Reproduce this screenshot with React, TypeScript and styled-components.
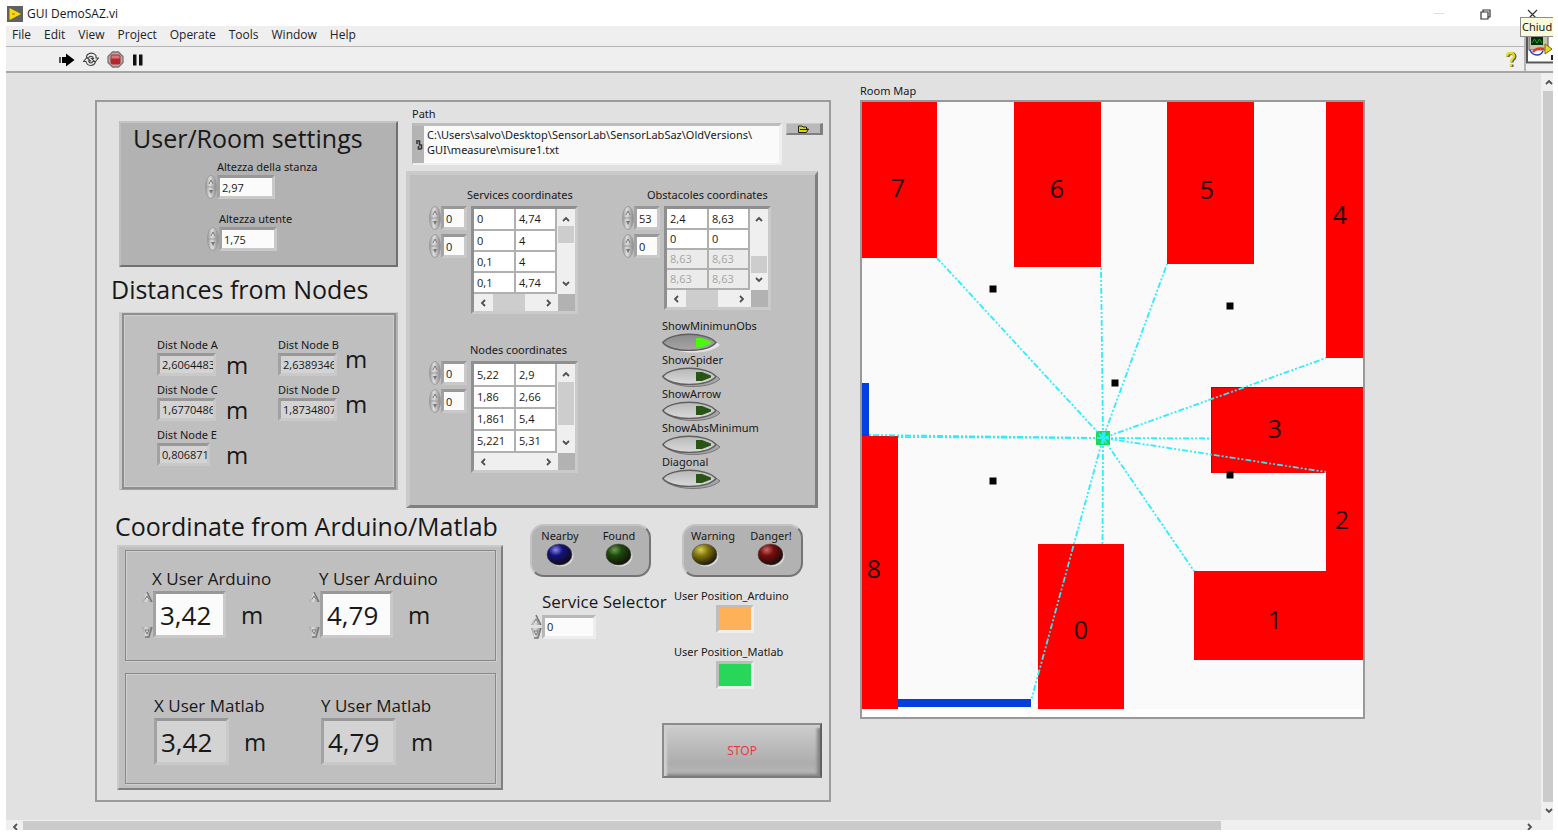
import React from "react";
import styled, { createGlobalStyle, css } from "styled-components";

const GlobalStyle = createGlobalStyle`
  *, *::before, *::after { box-sizing: border-box; }
  body {
    margin: 0;
    background: #fff;
    color: #181818;
    font-family: "Noto Sans", "Open Sans", sans-serif;
    font-size: 11px;
    line-height: 16px;
    overflow: hidden;
  }
  input, button, textarea { font: inherit; color: inherit; margin: 0; }
`;

const displayFont = `"Open Sans", "Noto Sans", sans-serif`;

/* ---------- window chrome ---------- */

const Window = styled.div`
  display: flex;
  flex-direction: column;
  height: 100vh;
  min-height: 830px;
  padding: 0 5px 4px 6px;
  overflow: hidden;
`;

const TitleBar = styled.header`
  display: flex;
  align-items: center;
  height: 26px;
  flex: none;
  padding: 2px 15px 0 1px;
  gap: 4px;
`;

const Title = styled.h1`
  flex: 1;
  margin: 0;
  font-family: ${displayFont};
  font-size: 12px;
  font-weight: 400;
`;

const WindowButtons = styled.div`
  display: flex;
  align-items: center;
  gap: 36px;
`;

const PlainButton = styled.button`
  display: flex;
  align-items: center;
  justify-content: center;
  padding: 0;
  border: 0;
  background: none;
`;

const Bars = styled.div`
  display: flex;
  flex: none;
  height: 47px;
  border-bottom: 2px solid #a6a6a6;
  background: #efefef;
`;

const BarStack = styled.div`
  flex: 1;
`;

const MenuBar = styled.nav`
  display: flex;
  align-items: center;
  height: 21px;
  gap: 13px;
  padding: 0 6px 2px;
  border-bottom: 1px solid #b5b5b5;
  font-family: ${displayFont};
  font-size: 12px;
`;

const MenuItem = styled(PlainButton)`
  color: #22222c;
`;

const ToolBar = styled.div`
  display: flex;
  align-items: center;
  height: 24px;
  padding: 1px 7px 0 53px;
  gap: 8px;
`;

const ToolSpacer = styled.div`
  flex: 1;
`;

const IconPane = styled.div`
  position: relative;
  width: 29px;
  border-left: 2px solid #b5b5b5;
  padding-top: 9px;
`;

const Tooltip = styled.div`
  position: absolute;
  z-index: 2;
  top: -9px;
  right: 0;
  width: 33px;
  height: 20px;
  padding-left: 1px;
  border: 1px solid #8c8c8c;
  border-width: 1px 0 1px 1px;
  background: #fbfbdc;
  line-height: 18px;
  white-space: nowrap;
`;

const Body = styled.div`
  display: grid;
  flex: 1;
  min-height: 0;
  grid-template-columns: 1fr 12px;
  grid-template-rows: 1fr 10px;
  background: #efefef;
`;

const VScroll = styled.div`
  display: flex;
  flex-direction: column;
  align-items: flex-end;
  overflow: hidden;
`;

const VThumb = styled.div`
  flex: 1;
  align-self: stretch;
  margin: 0 0 0 2px;
  background: #cbcbcb;
`;

const VArrow = styled(PlainButton)`
  height: 18px;
`;

const HScroll = styled.div`
  display: flex;
  grid-column: 1 / -1;
  padding: 1px 15px 0 0;
  overflow: hidden;
`;

const HArrow = styled(PlainButton)`
  width: 17px;
  height: 12px;
`;

const HThumb = styled.div`
  flex: 4;
  background: #cbcbcb;
`;

const HTrack = styled.div`
  flex: 1;
`;

const Workspace = styled.main`
  display: grid;
  grid-template-columns: 736fr 505fr;
  align-items: start;
  column-gap: 29px;
  padding: 27px 176px 18px 89px;
  background: #e1e1e1;
  overflow: hidden;
`;

/* ---------- frames and panels ---------- */

const MainFrame = styled.section`
  border: 2px solid #9b9b9b;
  padding-bottom: 10px;
`;

const TopRow = styled.div`
  display: grid;
  grid-template-columns: 308fr 424fr;
  align-items: start;
`;

const SettingsColumn = styled.div`
  padding: 19px 7px 0 22px;
`;

const raised = css`
  border: 2px solid;
  border-color: #cacaca #808080 #808080 #cacaca;
`;

const UserPanel = styled.div`
  ${raised}
  display: grid;
  align-content: start;
  row-gap: 6px;
  height: 146px;
  padding-left: 12px;
  border-color: #c4c4c4 #707070 #707070 #bdbdbd;
  background: #b2b2b2;
`;

const Heading = styled.h2<{ $line: number; $shift?: number }>`
  margin: 0 0 0 ${(p) => p.$shift ?? 0}px;
  font-family: ${displayFont};
  font-size: 25px;
  font-weight: 400;
  line-height: ${(p) => p.$line}px;
  white-space: nowrap;
`;

const DistancePanel = styled.div`
  display: grid;
  grid-template-columns: 69px 52px 67px 1fr;
  grid-auto-rows: 45px;
  height: 178px;
  padding: 24px 0 0 35px;
  border: solid;
  border-width: 1px 2px 1px 3px;
  border-color: #cfcfcf #b4b4b4 #a0a0a0 #c8c8c8;
  box-shadow: inset 0 0 0 2px #8e8e8e, inset 0 0 0 3px #cecece;
  background: #bfbfbf;
`;

const CoordinatesPanel = styled.div`
  ${raised}
  display: grid;
  grid-template-columns: 193px 1fr;
  border-width: 4px 3px 3px 4px;
  width: 412px;
  max-width: 100%;
  height: 337px;
  padding: 8px 0 0 19px;
  background: #bfbfbf;
`;

const BottomRow = styled.div`
  display: grid;
  grid-template-columns: 408fr 324fr;
`;

const PositionColumn = styled.div`
  padding-left: 20px;
`;

const PositionPanel = styled.div`
  ${raised}
  display: grid;
  row-gap: 12px;
  width: 386px;
  padding: 3px 5px 4px 6px;
  background: #bfbfbf;
`;

const PositionFrame = styled.div<{ $top: number }>`
  display: grid;
  grid-template-columns: 167px 1fr;
  height: 111px;
  padding: ${(p) => p.$top}px 0 0 15px;
  border: 1px solid #888;
  box-shadow: inset 1px 1px 0 #cfcfcf, 1px 1px 0 #cfcfcf;
`;

/* ---------- fields ---------- */

const FieldLabel = styled.label<{ $large?: boolean }>`
  display: block;
  width: max-content;
  white-space: nowrap;
  ${(p) =>
    p.$large &&
    css`
      font-family: ${displayFont};
      font-size: 17px;
      line-height: 24px;
    `}
`;

const FieldRow = styled.div`
  display: flex;
  align-items: center;
`;

const ValueInput = styled.input<{ $w: number; $h: number; $flat?: boolean; $big?: boolean }>`
  width: ${(p) => p.$w}px;
  height: ${(p) => p.$h}px;
  padding: 0 0 0 ${(p) => (p.$big ? 4 : 2)}px;
  border: 3px solid;
  border-color: #989898 #c9c9c9 #c9c9c9 #a2a2a2;
  border-radius: 0;
  outline: 0;
  background: ${(p) => (p.$flat ? "#d3d3d3" : "#fbfbfb")};
  font-family: ${displayFont};
  font-size: ${(p) => (p.$big ? 26 : 11)}px;
`;

const LightInput = styled(ValueInput)`
  border-color: #b8b8b8 #ededed #ededed #b8b8b8;
`;

const NumericBlock = styled.div<{ $left: number }>`
  padding-left: ${(p) => p.$left}px;
  margin-bottom: 6px;

  & > label { margin-left: 12px; }
`;

const Unit = styled.span<{ $lift?: boolean }>`
  align-self: end;
  padding-bottom: ${(p) => (p.$lift ? 6 : 0)}px;
  font-family: ${displayFont};
  font-size: 24px;
  line-height: 34px;
`;

const BigUnit = styled(Unit)`
  align-self: center;
  margin-left: 15px;
`;

function Spinner({ id, height = 24, bare = false }: { id: string; height?: number; bare?: boolean }) {
  const h = height;
  return (
    <svg width="12" height={h} viewBox={`0 0 12 ${h}`} aria-hidden="true">
      <defs>
        <linearGradient id={id} x1="0" x2="1">
          <stop offset="0" stopColor="#989898" />
          <stop offset="0.4" stopColor="#dedede" />
          <stop offset="1" stopColor="#868686" />
        </linearGradient>
      </defs>
      {bare ? (
        <>
          <path d="M1 11 L6 1 L11 11 Z" fill={`url(#${id})`} />
          <path d="M11 11 L6 1" stroke="#777" strokeWidth="1.5" />
          <path d="M4 8.500 L6 5 L8 8.500" fill="#e6e6e6" stroke="#777" />
          <path d={`M1 ${h - 11} L11 ${h - 11} L8 ${h - 1} L4 ${h - 1} Z`} fill={`url(#${id})`} />
          <path d={`M11 ${h - 11} L8 ${h - 1} H4`} fill="none" stroke="#777" strokeWidth="1.5" />
          <path d={`M4 ${h - 8} L8 ${h - 8} L6 ${h - 4} Z`} fill="#e6e6e6" stroke="#777" />
        </>
      ) : (
        <>
          <ellipse cx="6" cy={h / 2} rx="5.5" ry={h / 2 - 0.5} fill={`url(#${id})`} stroke="#9c9c9c" />
          <path d={`M1 ${h / 2} H11`} stroke="#9a9a9a" />
          <path d={`M4 ${h / 2 - 3} L6 ${h / 2 - 7} L8 ${h / 2 - 3}`} fill="#e2e2e2" stroke="#777" />
          <path d={`M4 ${h / 2 + 3} H8 L6 ${h / 2 + 7} Z`} fill="#777" />
        </>
      )}
    </svg>
  );
}

function Reading({ id, label, value, width = 59 }: { id: string; label: string; value: string; width?: number }) {
  return (
    <div>
      <FieldLabel htmlFor={id}>{label}</FieldLabel>
      <FieldRow>
        <ValueInput id={id} $w={width} $h={23} $flat readOnly defaultValue={value} />
      </FieldRow>
    </div>
  );
}

/* ---------- path control ---------- */

const PathColumn = styled.div`
  padding: 4px 6px 0 1px;
`;

const PathLabel = styled(FieldLabel)`
  margin-left: 6px;
`;

const PathRow = styled.div`
  display: flex;
  align-items: flex-start;
  gap: 4px;
  margin: 1px 0 6px 6px;
`;

const PathBox = styled.div`
  display: flex;
  flex: 1;
  height: 42px;
  border: 3px solid;
  border-color: #bdbdbd #efefef #efefef #b4b4b4;
  border-width: 3px 3px 2px 1px;
  background: #fafafa;
`;

const PathMark = styled.div`
  display: flex;
  align-items: center;
  justify-content: center;
  width: 11px;
  background: #b4b4b4;
`;

const PathText = styled.textarea`
  flex: 1;
  min-width: 0;
  padding: 1px 0 0 3px;
  border: 0;
  outline: 0;
  resize: none;
  overflow: hidden;
  background: none;
  line-height: 15px;
  white-space: pre;
`;

const BrowseButton = styled(PlainButton)`
  ${raised}
  width: 37px;
  height: 12px;
  border-width: 1px 3px 2px 1px;
  background: #b9b9b9;
`;

/* ---------- arrays ---------- */

const ArrayTitle = styled.div<{ $shift: number }>`
  margin-left: ${(p) => p.$shift}px;
  line-height: 23px;
  white-space: nowrap;
`;

const ArrayBlock = styled.div`
  margin-bottom: 24px;
`;

const ArrayRow = styled.div`
  display: flex;
  align-items: flex-start;
  gap: 4px;
`;

const IndexStack = styled.div`
  display: grid;
  row-gap: 4px;
`;

const ArrayBox = styled.div`
  width: 107px;
  border: 3px solid;
  border-color: #8f8f8f #cacaca #cacaca #8f8f8f;
  background: #efefef;
`;

const ArrayBody = styled.div`
  display: flex;
`;

const DataTable = styled.table`
  width: 83px;
  border-collapse: collapse;
  table-layout: fixed;
`;

const Cell = styled.td<{ $h: number; $dim?: boolean }>`
  height: ${(p) => p.$h}px;
  padding: 0 0 0 3px;
  border-right: 2px solid #b0b0b0;
  border-bottom: 2px solid #b0b0b0;
  background: ${(p) => (p.$dim ? "#ebebeb" : "#fff")};
  color: ${(p) => (p.$dim ? "#a5a5a5" : "#181818")};
  font-family: ${displayFont};
  line-height: 16px;
`;

const SideBar = styled.div`
  position: relative;
  display: flex;
  flex: 1;
  flex-direction: column;
  align-items: center;
  justify-content: space-between;
  padding: 6px 0;
`;

const SideThumb = styled.div<{ $top: number; $size: number }>`
  position: absolute;
  top: ${(p) => p.$top}px;
  left: 1px;
  right: 1px;
  height: ${(p) => p.$size}px;
  background: #cdcdcd;
`;

const FootBar = styled.div`
  display: flex;
  align-items: stretch;
  height: 17px;
`;

const FootTrack = styled.div`
  display: flex;
  flex: 1;
  align-items: center;
  justify-content: space-between;
  padding: 0 5px;
`;

const FootThumb = styled.div<{ $on: boolean }>`
  width: 32px;
  height: 17px;
  margin-left: -14px;
  background: ${(p) => (p.$on ? "#cdcdcd" : "transparent")};
`;

const FootCorner = styled.div`
  width: 17px;
  background: #b2b2b2;
`;

type Direction = "up" | "down" | "left" | "right";

const chevrons: Record<Direction, string> = {
  up: "M1 6 L4 3 L7 6",
  down: "M1 2 L4 5 L7 2",
  left: "M6 1 L3 4 L6 7",
  right: "M2 1 L5 4 L2 7",
};

function Chevron({ dir }: { dir: Direction }) {
  return (
    <svg width="8" height="8" viewBox="0 0 8 8" fill="none" stroke="#505050" strokeWidth="1.8" aria-hidden="true">
      <path d={chevrons[dir]} />
    </svg>
  );
}

interface ArrayProps {
  name: string;
  title: string;
  titleShift: number;
  index: [string, string];
  rows: [string, string][];
  rowHeight: number;
  thumb: [number, number];
  footThumb?: boolean;
  dimFrom?: number;
}

function CoordinateArray(p: ArrayProps) {
  return (
    <ArrayBlock>
      <ArrayTitle $shift={p.titleShift}>{p.title}</ArrayTitle>
      <ArrayRow>
        <IndexStack>
          {p.index.map((v, i) => (
            <FieldRow key={i}>
              <Spinner id={`${p.name}-index-${i}`} />
              <ValueInput $w={26} $h={24} defaultValue={v} aria-label={`${p.title} index ${i + 1}`} />
            </FieldRow>
          ))}
        </IndexStack>
        <ArrayBox>
          <ArrayBody>
            <DataTable aria-label={p.title}>
              <tbody>
                {p.rows.map((row, r) => (
                  <tr key={r}>
                    {row.map((v, c) => (
                      <Cell key={c} $h={p.rowHeight} $dim={p.dimFrom !== undefined && r >= p.dimFrom}>
                        {v}
                      </Cell>
                    ))}
                  </tr>
                ))}
              </tbody>
            </DataTable>
            <SideBar>
              <Chevron dir="up" />
              <SideThumb $top={p.thumb[0]} $size={p.thumb[1]} />
              <Chevron dir="down" />
            </SideBar>
          </ArrayBody>
          <FootBar>
            <FootTrack>
              <Chevron dir="left" />
              <FootThumb $on={!!p.footThumb} />
              <Chevron dir="right" />
            </FootTrack>
            <FootCorner />
          </FootBar>
        </ArrayBox>
      </ArrayRow>
    </ArrayBlock>
  );
}

/* ---------- toggles ---------- */

const ToggleList = styled.div`
  display: grid;
  margin: -16px 0 0 40px;
`;

const ToggleLabel = styled.label`
  display: block;
  height: 34px;
  line-height: 15px;
`;

const HiddenCheck = styled.input`
  position: absolute;
  width: 56px;
  height: 18px;
  opacity: 0;
`;

const ToggleArt = styled.svg`
  display: block;
`;

function Toggle({ label, on = false }: { label: string; on?: boolean }) {
  return (
    <ToggleLabel>
      {label}
      <HiddenCheck type="checkbox" defaultChecked={on} />
      <ToggleArt width="60" height="20" viewBox="0 0 60 20" aria-hidden="true">
        <defs>
          <linearGradient id={`toggle-${label}`} x1="0" y1="0" x2="0" y2="1">
            <stop offset="0" stopColor={on ? "#8c8c8c" : "#b8b8b8"} />
            <stop offset="1" stopColor={on ? "#a5a5a5" : "#dadada"} />
          </linearGradient>
        </defs>
        <path d="M4 12 C10 2 48 2 58 12 C48 22 14 22 4 12 Z" fill={on ? "#e6e6e6" : "#a5a5a5"} stroke={on ? "none" : "#777"} />
        <path
          d="M0.8 9.500 C9 -1.500 45 -1.500 54 9.500 C45 20 9 20 0.8 9.500 Z"
          fill={`url(#toggle-${label})`}
          stroke="#5f5f5f"
          strokeWidth="1.400"
        />
        <path d="M34 5 H40 L49 8.500 V10.500 L40 14 H34 Z" fill={on ? "#4cf711" : "#2a5416"} />
      </ToggleArt>
    </ToggleLabel>
  );
}

/* ---------- status area ---------- */

const StatusArea = styled.div`
  display: grid;
  grid-template-columns: 132px 1fr;
  align-content: start;
  padding: 16px 7px 0 25px;
`;

const LedGroup = styled.div`
  display: grid;
  grid-template-columns: 59px 1fr;
  width: 121px;
  height: 53px;
  padding: 3px 0 0 7px;
  border: 2px solid;
  border-color: #c3c3c3 #747474 #747474 #c3c3c3;
  border-radius: 14px;
  background: #b2b2b2;
`;

const LedItem = styled.div<{ $start?: boolean }>`
  display: grid;
  align-content: start;
  justify-items: ${(p) => (p.$start ? "start" : "center")};
  width: 42px;
  line-height: 14px;
  white-space: nowrap;
`;

const StatusColumn = styled.div<{ $shift: number }>`
  margin-left: ${(p) => p.$shift}px;
`;

function Led({ label, light, dark, start }: { label: string; light: string; dark: string; start?: boolean }) {
  return (
    <LedItem $start={start}>
      {label}
      <svg width="28" height="24" viewBox="0 0 28 24" aria-hidden="true">
        <defs>
          <radialGradient id={`led-${label}`} cx="0.35" cy="0.28" r="0.8">
            <stop offset="0" stopColor={light} />
            <stop offset="0.35" stopColor={dark} />
            <stop offset="1" stopColor="#0d0a08" />
          </radialGradient>
        </defs>
        <ellipse cx="15" cy="13" rx="12.5" ry="10.5" fill="#d8d8d8" />
        <ellipse cx="13.5" cy="11.5" rx="12.5" ry="10.5" fill={`url(#led-${label})`} stroke="#555" strokeWidth="0.6" />
      </svg>
    </LedItem>
  );
}

const SelectorBlock = styled.div`
  margin-top: 13px;

  & > label { margin-left: 12px; }
`;

const SwatchBlock = styled.div`
  display: grid;
  justify-items: start;
  margin: 10px 0 10px -8px;
  line-height: 18px;
`;

const Swatch = styled.div<{ $color: string }>`
  width: 38px;
  height: 28px;
  margin-left: 42px;
  border: 3px solid;
  border-color: #bdbdbd #eee #eee #bdbdbd;
  background: ${(p) => p.$color};
`;

const StopButton = styled.button`
  display: block;
  width: 160px;
  height: 55px;
  margin: 34px 0 0 -20px;
  padding: 0;
  border: 2px solid;
  border-color: #8b8b8b #606060 #7b7b7b #8b8b8b;
  border-radius: 0;
  box-shadow: inset 3px 3px 2px #cfcfcf, inset -3px -2px 3px #858585;
  background: linear-gradient(#cdcdcd, #adadad 75%, #b8b8b8);
  color: #f03040;
  font-family: ${displayFont};
  font-size: 12px;
`;

/* ---------- room map ---------- */

const MapColumn = styled.section`
  margin-top: -18px;
`;

const MapTitle = styled.h2`
  margin: 0 0 1px;
  font-size: 11px;
  font-weight: 400;
  line-height: 17px;
`;

const MapFrame = styled.div`
  border: 2px solid #999;
  background: #fff;
`;

const MapSvg = styled.svg`
  display: block;
  width: 100%;
  height: auto;
  font-family: ${displayFont};
  font-size: 25px;
`;

const obstacles = [
  { x: 0, y: 0, w: 75, h: 156, n: "7", cx: 36, cy: 86 },
  { x: 152, y: 0, w: 87, h: 165, n: "6", cx: 195, cy: 87 },
  { x: 305, y: 0, w: 87, h: 162, n: "5", cx: 345, cy: 88 },
  { x: 464, y: 0, w: 37, h: 256, n: "4", cx: 478, cy: 113 },
  { x: 0, y: 334, w: 36, h: 273, n: "8", cx: 12, cy: 467 },
  { x: 176, y: 442, w: 86, h: 165, n: "0", cx: 219, cy: 528 },
  { x: 332, y: 469, w: 169, h: 89, n: "1", cx: 413, cy: 518 },
  { x: 464, y: 370, w: 37, h: 100, n: "2", cx: 480, cy: 418 },
  { x: 349, y: 285, w: 152, h: 86, n: "3", cx: 413, cy: 327 },
];

const user = { x: 241, y: 336 };

const rays = [
  [75, 156], [239, 165], [305, 162], [464, 256], [349, 336.5], [464, 370],
  [332, 469], [240.5, 442], [169.5, 597], [36, 335], [7, 333],
];

const nodes = [[131, 187], [368, 204], [253, 281], [131, 379], [368, 373]];

function RoomMap() {
  return (
    <MapSvg viewBox="0 0 501 615" role="img" aria-label="Room Map">
      <rect width="501" height="607" fill="#fafafa" />
      {obstacles.map((o) => (
        <rect key={o.n} x={o.x} y={o.y} width={o.w} height={o.h} fill="#fe0000" />
      ))}
      <path d="M349.5 371 V285.5 H501" fill="none" stroke="#3a1fb0" />
      <rect x="0" y="281" width="7" height="53" fill="#0040dc" />
      <rect x="36" y="597" width="133" height="8" fill="#0040dc" />
      <rect x={user.x - 7} y={user.y - 7} width="14" height="14" fill="#23d65a" />
      <g stroke="#29eefc" strokeWidth="1.8" strokeDasharray="6 2 2 2 2 2">
        {rays.map(([x, y]) => (
          <line key={`${x}-${y}`} x1={user.x} y1={user.y} x2={x} y2={y} />
        ))}
      </g>
      {nodes.map(([x, y]) => (
        <rect key={`${x}-${y}`} x={x - 3.5} y={y - 3.5} width="7" height="7" fill="#050505" />
      ))}
      {obstacles.map((o) => (
        <text key={o.n} x={o.cx} y={o.cy + 9} textAnchor="middle" fill="#200">
          {o.n}
        </text>
      ))}
    </MapSvg>
  );
}

/* ---------- position readouts ---------- */

interface PositionProps {
  id: string;
  label: string;
  value: string;
  editable?: boolean;
}

const PositionBlock = styled.div<{ $editable?: boolean }>`
  & > label { margin-left: ${(p) => (p.$editable ? 11 : 13)}px; }
  & > div { padding-left: ${(p) => (p.$editable ? 0 : 13)}px; }
`;

function Position({ id, label, value, editable }: PositionProps) {
  return (
    <PositionBlock $editable={editable}>
      <FieldLabel $large htmlFor={id}>{label}</FieldLabel>
      <FieldRow>
        {editable && <Spinner id={`${id}-spin`} height={47} bare />}
        <ValueInput id={id} $w={editable ? 73 : 75} $h={47} $big $flat={!editable} readOnly={!editable} defaultValue={value} />
        <BigUnit>m</BigUnit>
      </FieldRow>
    </PositionBlock>
  );
}

/* ---------- icons ---------- */

const AppIcon = () => (
  <svg width="16" height="16" viewBox="0 0 16 16" aria-hidden="true">
    <rect width="16" height="16" fill="#5e6262" />
    <path d="M2.500 2 L14 8 L2.500 14 Z" fill="#ffd900" />
    <path d="M5 8 H8" stroke="#8a7400" />
  </svg>
);

const RunIcon = () => (
  <svg width="16" height="14" viewBox="0 0 16 14" aria-hidden="true">
    <path d="M0 4 H2 V10 H0 Z" fill="#555" />
    <path d="M3 4 H7 V0.500 L15.500 7 L7 13.500 V10 H3 Z" fill="#000" />
  </svg>
);

const RunLoopIcon = () => (
  <svg width="16" height="15" viewBox="0 0 16 15" fill="#efefef" stroke="#444" strokeWidth="1.1" aria-hidden="true">
    <path d="M3.500 6 C3 1 10 -0.500 13 3.500 V6 H15.500 L12 10 L8.500 6.500 H10.500 C10 4 6.500 3.500 5.500 6 Z" />
    <path d="M12.500 9.500 C11 15 4 14.500 3 9.500 H0.500 L4 5.500 L7.500 9 H5.500 C6.500 11.500 9 11.500 10 9.500 Z" />
  </svg>
);

const AbortIcon = () => (
  <svg width="17" height="17" viewBox="0 0 17 17" aria-hidden="true">
    <path d="M5.500 1 H11.500 L16 5.500 V11.500 L11.500 16 H5.500 L1 11.500 V5.500 Z" fill="#b9a9a9" stroke="#777" strokeWidth="1.300" />
    <rect x="3.500" y="3.500" width="10" height="10" rx="2" fill="#b3282c" />
    <path d="M4.500 6 H12.500" stroke="#d87779" strokeWidth="3" />
  </svg>
);

const PauseIcon = () => (
  <svg width="12" height="12" viewBox="0 0 12 12" aria-hidden="true">
    <path d="M1 0.500 H4.500 V11.500 H1 Z M7 0.500 H10.500 V11.500 H7 Z" fill="#111" />
  </svg>
);

const HelpIcon = () => (
  <svg width="12" height="17" viewBox="0 0 12 17" fill="none" aria-hidden="true">
    <path d="M3 6 C3 1.500 10 1.500 10 5.500 C10 8.500 7 8 7 11.500 M7 13.500 V16" stroke="#555" strokeWidth="3" />
    <path d="M2 5.500 C2 1 9 1 9 5 C9 8 6 7.500 6 11 M6 13 V15.500" stroke="#e6dc1e" strokeWidth="2.400" />
  </svg>
);

const ViIcon = () => (
  <svg width="27" height="29" viewBox="0 0 27 29" aria-hidden="true">
    <path d="M0 0 H27 V29 H0 Z" fill="#fff" />
    <path d="M1 0 V27.500 H27" fill="none" stroke="#555" strokeWidth="2" />
    <rect x="3" y="1" width="19" height="14" fill="#c9c3ae" stroke="#555" />
    <rect x="5" y="2" width="12" height="8" fill="#052d0a" />
    <path d="M6 8 L8.500 4 L11 8 L13.500 4 L16 8" fill="none" stroke="#15a32c" />
    <path d="M4 15 C7 22 15 21 17 16" fill="#fff" stroke="#3034c9" strokeWidth="1.500" />
    <path d="M7 17 Q11 12 18 14" fill="none" stroke="#e03a2e" strokeWidth="2.500" />
    <path d="M19 9 L26 14 L19 19 Z" fill="#e8d820" stroke="#776c00" />
    <path d="M26 20 V25" stroke="#222" strokeWidth="2" />
  </svg>
);

const PathIcon = () => (
  <svg width="8" height="12" viewBox="0 0 8 12" fill="none" stroke="#333" strokeWidth="1.600" aria-hidden="true">
    <path d="M1 2 H4.500 V6 M3 4 H1 M4 6 H6.500 V10 M6.500 10 H3.500 V7" />
  </svg>
);

const FolderIcon = () => (
  <svg width="11" height="8" viewBox="0 0 11 8" aria-hidden="true">
    <path d="M0.500 7.500 V1 H4 L5 2 H8.500 V4 H10.500 L8.500 7.500 Z" fill="#d9d41c" stroke="#222" />
    <path d="M2 4.500 H10" stroke="#222" />
  </svg>
);

const menus = ["File", "Edit", "View", "Project", "Operate", "Tools", "Window", "Help"];

export default function App() {
  return (
    <>
      <GlobalStyle />
      <Window>
        <TitleBar>
          <AppIcon />
          <Title>GUI DemoSAZ.vi</Title>
          <WindowButtons>
            <PlainButton aria-label="Minimize">
              <svg width="10" height="10" viewBox="0 0 10 10"><path d="M0 4.500 H10" stroke="#ddd" /></svg>
            </PlainButton>
            <PlainButton aria-label="Restore">
              <svg width="11" height="11" viewBox="0 0 11 11" fill="none" stroke="#333" strokeWidth="1.200">
                <path d="M1 3 H8 V10 H1 Z M3 3 V1 H10 V8 H8" />
              </svg>
            </PlainButton>
            <PlainButton aria-label="Close">
              <svg width="11" height="11" viewBox="0 0 11 11"><path d="M1 1 L10 10 M10 1 L1 10" stroke="#333" strokeWidth="1.200" /></svg>
            </PlainButton>
          </WindowButtons>
        </TitleBar>
        <Bars>
          <BarStack>
            <MenuBar>
              {menus.map((m) => <MenuItem key={m}>{m}</MenuItem>)}
            </MenuBar>
            <ToolBar>
              <PlainButton aria-label="Run"><RunIcon /></PlainButton>
              <PlainButton aria-label="Run continuously"><RunLoopIcon /></PlainButton>
              <PlainButton aria-label="Abort"><AbortIcon /></PlainButton>
              <PlainButton aria-label="Pause"><PauseIcon /></PlainButton>
              <ToolSpacer />
              <PlainButton aria-label="Context help"><HelpIcon /></PlainButton>
            </ToolBar>
          </BarStack>
          <IconPane>
            <Tooltip role="tooltip">Chiud</Tooltip>
            <ViIcon />
          </IconPane>
        </Bars>
        <Body>
          <Workspace>
            <MainFrame>
              <TopRow>
                <SettingsColumn>
                  <UserPanel>
                    <Heading $line={30}>User/Room settings</Heading>
                    <NumericBlock $left={72}>
                      <FieldLabel htmlFor="room-height">Altezza della stanza</FieldLabel>
                      <FieldRow>
                        <Spinner id="sp-room" />
                        <ValueInput id="room-height" $w={58} $h={24} defaultValue="2,97" />
                      </FieldRow>
                    </NumericBlock>
                    <NumericBlock $left={74}>
                      <FieldLabel htmlFor="user-height">Altezza utente</FieldLabel>
                      <FieldRow>
                        <Spinner id="sp-user" />
                        <ValueInput id="user-height" $w={58} $h={24} defaultValue="1,75" />
                      </FieldRow>
                    </NumericBlock>
                  </UserPanel>
                  <Heading $line={45} $shift={-8}>Distances from Nodes</Heading>
                  <DistancePanel>
                    <Reading id="dist-a" label="Dist Node A" value="2,6064483" />
                    <Unit>m</Unit>
                    <Reading id="dist-b" label="Dist Node B" value="2,6389346" />
                    <Unit $lift>m</Unit>
                    <Reading id="dist-c" label="Dist Node C" value="1,6770486" />
                    <Unit>m</Unit>
                    <Reading id="dist-d" label="Dist Node D" value="1,8734807" />
                    <Unit $lift>m</Unit>
                    <Reading id="dist-e" label="Dist Node E" value="0,8068718" width={53} />
                    <Unit>m</Unit>
                  </DistancePanel>
                </SettingsColumn>
                <PathColumn>
                  <PathLabel htmlFor="path">Path</PathLabel>
                  <PathRow>
                    <PathBox>
                      <PathMark><PathIcon /></PathMark>
                      <PathText
                        id="path"
                        spellCheck={false}
                        defaultValue={"C:\\Users\\salvo\\Desktop\\SensorLab\\SensorLabSaz\\OldVersions\\\nGUI\\measure\\misure1.txt"}
                      />
                    </PathBox>
                    <BrowseButton aria-label="Browse"><FolderIcon /></BrowseButton>
                  </PathRow>
                  <CoordinatesPanel>
                    <div>
                      <CoordinateArray
                        name="services"
                        title="Services coordinates"
                        titleShift={38}
                        index={["0", "0"]}
                        rows={[["0", "4,74"], ["0", "4"], ["0,1", "4"], ["0,1", "4,74"]]}
                        rowHeight={21}
                        thumb={[17, 17]}
                        footThumb
                      />
                      <CoordinateArray
                        name="nodes"
                        title="Nodes coordinates"
                        titleShift={41}
                        index={["0", "0"]}
                        rows={[["5,22", "2,9"], ["1,86", "2,66"], ["1,861", "5,4"], ["5,221", "5,31"]]}
                        rowHeight={22}
                        thumb={[18, 43]}
                      />
                    </div>
                    <div>
                      <CoordinateArray
                        name="obstacles"
                        title="Obstacoles coordinates"
                        titleShift={25}
                        index={["53", "0"]}
                        rows={[["2,4", "8,63"], ["0", "0"], ["8,63", "8,63"], ["8,63", "8,63"]]}
                        rowHeight={20}
                        thumb={[47, 17]}
                        footThumb
                        dimFrom={2}
                      />
                      <ToggleList>
                        <Toggle label="ShowMinimunObs" on />
                        <Toggle label="ShowSpider" />
                        <Toggle label="ShowArrow" />
                        <Toggle label="ShowAbsMinimum" />
                        <Toggle label="Diagonal" />
                      </ToggleList>
                    </div>
                  </CoordinatesPanel>
                </PathColumn>
              </TopRow>
              <BottomRow>
                <PositionColumn>
                  <Heading $line={37} $shift={-2}>Coordinate from Arduino/Matlab</Heading>
                  <PositionPanel>
                    <PositionFrame $top={16}>
                      <Position id="x-arduino" label="X User Arduino" value="3,42" editable />
                      <Position id="y-arduino" label="Y User Arduino" value="4,79" editable />
                    </PositionFrame>
                    <PositionFrame $top={20}>
                      <Position id="x-matlab" label="X User Matlab" value="3,42" />
                      <Position id="y-matlab" label="Y User Matlab" value="4,79" />
                    </PositionFrame>
                  </PositionPanel>
                </PositionColumn>
                <StatusArea>
                  <StatusColumn $shift={0}>
                    <LedGroup>
                      <Led label="Nearby" light="#8a8ae8" dark="#15127c" />
                      <Led label="Found" light="#6f9a5c" dark="#1e4a0c" />
                    </LedGroup>
                    <SelectorBlock>
                      <FieldLabel $large htmlFor="service">Service Selector</FieldLabel>
                      <FieldRow>
                        <Spinner id="sp-service" bare height={25} />
                        <LightInput id="service" $w={54} $h={24} defaultValue="0" />
                      </FieldRow>
                    </SelectorBlock>
                  </StatusColumn>
                  <StatusColumn $shift={20}>
                    <LedGroup>
                      <Led label="Warning" light="#d6cf62" dark="#85780c" start />
                      <Led label="Danger!" light="#c86a6a" dark="#780d0d" />
                    </LedGroup>
                    <SwatchBlock>
                      User Position_Arduino
                      <Swatch $color="#ffb15a" />
                    </SwatchBlock>
                    <SwatchBlock>
                      User Position_Matlab
                      <Swatch $color="#28d75a" />
                    </SwatchBlock>
                    <StopButton>STOP</StopButton>
                  </StatusColumn>
                </StatusArea>
              </BottomRow>
            </MainFrame>
            <MapColumn>
              <MapTitle>Room Map</MapTitle>
              <MapFrame>
                <RoomMap />
              </MapFrame>
            </MapColumn>
          </Workspace>
          <VScroll>
            <VArrow aria-label="Scroll up"><Chevron dir="up" /></VArrow>
            <VThumb />
            <VArrow aria-label="Scroll down"><Chevron dir="down" /></VArrow>
          </VScroll>
          <HScroll>
            <HArrow aria-label="Scroll left"><Chevron dir="left" /></HArrow>
            <HThumb />
            <HTrack />
            <HArrow aria-label="Scroll right"><Chevron dir="right" /></HArrow>
          </HScroll>
        </Body>
      </Window>
    </>
  );
}
